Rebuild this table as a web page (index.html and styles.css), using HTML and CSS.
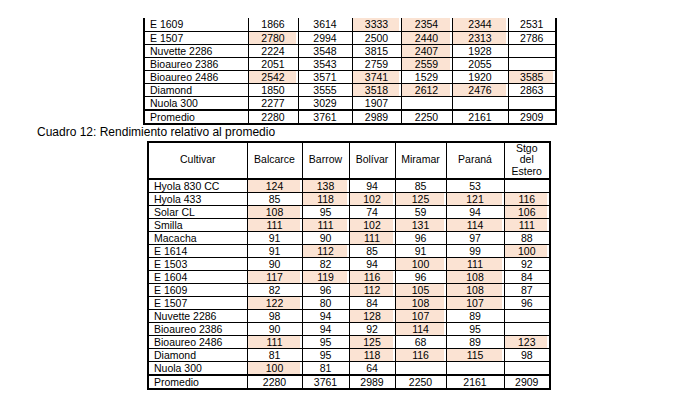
FILE: index.html
```html
<!DOCTYPE html>
<html lang="es">
<head>
<meta charset="utf-8">
<title>Rendimiento relativo al promedio</title>
<link rel="stylesheet" href="styles.css">
</head>
<body>
<main class="page">
  <table class="grid grid-top">
    <colgroup>
      <col class="c-top-0"><col class="c-top-1"><col class="c-top-2"><col class="c-top-3"><col class="c-top-4"><col class="c-top-5"><col class="c-top-6">
    </colgroup>
    <tbody>
      <tr><td class="name i1">E 1609</td><td>1866</td><td>3614</td><td class="s">3333</td><td class="s">2354</td><td class="s">2344</td><td>2531</td></tr>
      <tr><td class="name i1">E 1507</td><td class="s">2780</td><td>2994</td><td>2500</td><td class="s">2440</td><td class="s">2313</td><td>2786</td></tr>
      <tr><td class="name i3">Nuvette 2286</td><td>2224</td><td>3548</td><td>3815</td><td class="s">2407</td><td>1928</td><td></td></tr>
      <tr><td class="name i2">Bioaureo 2386</td><td>2051</td><td>3543</td><td>2759</td><td class="s">2559</td><td>2055</td><td></td></tr>
      <tr><td class="name i2">Bioaureo 2486</td><td class="s">2542</td><td>3571</td><td class="s">3741</td><td>1529</td><td>1920</td><td class="s">3585</td></tr>
      <tr><td class="name">Diamond</td><td>1850</td><td>3555</td><td class="s">3518</td><td class="s">2612</td><td class="s">2476</td><td>2863</td></tr>
      <tr><td class="name">Nuola 300</td><td>2277</td><td>3029</td><td>1907</td><td></td><td></td><td></td></tr>
      <tr class="total"><td class="name">Promedio</td><td>2280</td><td>3761</td><td>2989</td><td>2250</td><td>2161</td><td>2909</td></tr>
    </tbody>
  </table>

  <p class="caption">Cuadro 12: Rendimiento relativo al promedio</p>

  <table class="grid grid-rel">
    <colgroup>
      <col class="c-rel-0"><col class="c-rel-1"><col class="c-rel-2"><col class="c-rel-3"><col class="c-rel-4"><col class="c-rel-5"><col class="c-rel-6">
    </colgroup>
    <thead>
      <tr class="head">
        <th>Cultivar</th><th>Balcarce</th><th>Barrow</th><th>Bolívar</th><th>Miramar</th><th>Paraná</th><th>Stgo<br>del<br>Estero</th>
      </tr>
    </thead>
    <tbody>
      <tr><td class="name">Hyola 830 CC</td><td class="s">124</td><td class="s">138</td><td>94</td><td>85</td><td>53</td><td></td></tr>
      <tr><td class="name">Hyola 433</td><td>85</td><td class="s">118</td><td class="s">102</td><td class="s">125</td><td class="s">121</td><td class="s">116</td></tr>
      <tr><td class="name">Solar CL</td><td class="s">108</td><td>95</td><td>74</td><td>59</td><td>94</td><td class="s">106</td></tr>
      <tr><td class="name">Smilla</td><td class="s">111</td><td class="s">111</td><td class="s">102</td><td class="s">131</td><td class="s">114</td><td class="s">111</td></tr>
      <tr><td class="name">Macacha</td><td>91</td><td>90</td><td class="s">111</td><td>96</td><td>97</td><td>88</td></tr>
      <tr><td class="name">E 1614</td><td>91</td><td class="s">112</td><td>85</td><td>91</td><td>99</td><td class="s">100</td></tr>
      <tr><td class="name">E 1503</td><td>90</td><td>82</td><td>94</td><td class="s">100</td><td class="s">111</td><td>92</td></tr>
      <tr><td class="name r1">E 1604</td><td class="s">117</td><td class="s">119</td><td class="s">116</td><td>96</td><td class="s">108</td><td>84</td></tr>
      <tr><td class="name r1">E 1609</td><td>82</td><td>96</td><td class="s">112</td><td class="s">105</td><td class="s">108</td><td>87</td></tr>
      <tr><td class="name r1">E 1507</td><td class="s">122</td><td>80</td><td>84</td><td class="s">108</td><td class="s">107</td><td>96</td></tr>
      <tr><td class="name r2">Nuvette 2286</td><td>98</td><td>94</td><td class="s">128</td><td class="s">107</td><td>89</td><td></td></tr>
      <tr><td class="name r3">Bioaureo 2386</td><td>90</td><td>94</td><td>92</td><td class="s">114</td><td>95</td><td></td></tr>
      <tr><td class="name r3">Bioaureo 2486</td><td class="s">111</td><td>95</td><td class="s">125</td><td>68</td><td>89</td><td class="s">123</td></tr>
      <tr><td class="name">Diamond</td><td>81</td><td>95</td><td class="s">118</td><td class="s">116</td><td class="s">115</td><td>98</td></tr>
      <tr><td class="name">Nuola 300</td><td class="s">100</td><td>81</td><td>64</td><td></td><td></td><td></td></tr>
      <tr class="total"><td class="name">Promedio</td><td>2280</td><td>3761</td><td>2989</td><td>2250</td><td>2161</td><td>2909</td></tr>
    </tbody>
  </table>
</main>
</body>
</html>
```

FILE: styles.css
```css
html, body {
  margin: 0;
  padding: 0;
  background: #fff;
}

body {
  font-family: "Liberation Sans", Arial, sans-serif;
  color: #000;
}

.page {
  width: 690px;
  height: 400px;
  overflow: hidden;
  padding-top: 18px;
  box-sizing: border-box;
}

.grid {
  border-collapse: collapse;
  table-layout: fixed;
  font-size: 10.5px;
  line-height: 12px;
}

.grid td,
.grid th {
  padding: 0;
  border: 1px solid #000;
  text-align: center;
  vertical-align: middle;
  font-weight: normal;
  white-space: nowrap;
  overflow: hidden;
}

.grid tbody tr {
  height: 13px;
}

.grid td.name {
  text-align: left;
  padding-left: 5px;
}

.grid td.s {
  background: #fbe3d3;
  box-shadow: inset -2px 0 #fff;
}

.grid .total td {
  border-top: 2px solid #000;
}

/* top table (continuation of previous cuadro) */
.grid-top {
  margin-left: 143px;
  width: 412px;
  border-left: 2px solid #000;
  border-right: 2px solid #000;
  border-bottom: 2px solid #000;
}

.grid-top tbody tr:first-child td {
  border-top: none;
}

.grid-top .i1 { padding-left: 8px; }
.grid-top .i2 { padding-left: 9px; }
.grid-top .i3 { padding-left: 10px; }

.c-top-0 { width: 104px; }
.c-top-1 { width: 50px; }
.c-top-2 { width: 54px; }
.c-top-3 { width: 49px; }
.c-top-4 { width: 51px; }
.c-top-5 { width: 56px; }
.c-top-6 { width: 48px; }

.caption {
  margin: 0 0 0 37px;
  font-size: 12px;
  line-height: 14px;
  height: 14px;
}

/* relative yield table */
.grid-rel {
  margin: 2px 0 0 147px;
  width: 402px;
  border: 2px solid #000;
}

.grid-rel .head {
  height: 37px;
}

.grid-rel .head th {
  border-bottom: 2px solid #000;
  line-height: 11.5px;
}

.grid-rel .r1 { padding-left: 9px; }
.grid-rel .r2 { padding-left: 8px; }
.grid-rel .r3 { padding-left: 9px; }

.c-rel-0 { width: 99px; }
.c-rel-1 { width: 55px; }
.c-rel-2 { width: 47px; }
.c-rel-3 { width: 46px; }
.c-rel-4 { width: 51px; }
.c-rel-5 { width: 58px; }
.c-rel-6 { width: 46px; }
```
